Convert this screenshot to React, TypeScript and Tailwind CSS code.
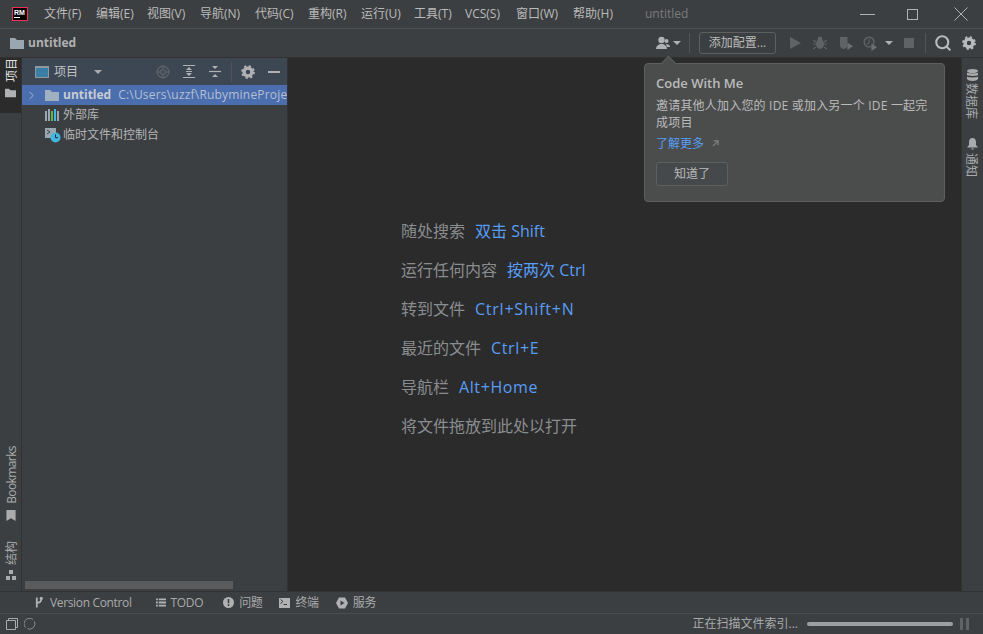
import { ChevronRight, Search } from "lucide-react";

const font = "font-['Open_Sans','Noto_Sans_CJK_SC',sans-serif]";

const menus = [
  ["文件(F)", "w-[52px]"],
  ["编辑(E)", "w-[51px]"],
  ["视图(V)", "w-[53px]"],
  ["导航(N)", "w-[55px]"],
  ["代码(C)", "w-[53px]"],
  ["重构(R)", "w-[53px]"],
  ["运行(U)", "w-[53px]"],
  ["工具(T)", "w-[51px]"],
  ["VCS(S)", "w-[51px]"],
  ["窗口(W)", "w-[57px]"],
  ["帮助(H)", "w-[41px]"],
];

const hints = [
  ["随处搜索", "双击 Shift", ""],
  ["运行任何内容", "按两次 Ctrl", ""],
  ["转到文件", "Ctrl+Shift+N", "tracking-[0.75px]"],
  ["最近的文件", "Ctrl+E", "tracking-[0.65px]"],
  ["导航栏", "Alt+Home", "tracking-[0.6px]"],
  ["将文件拖放到此处以打开", "", ""],
];

const FolderIcon = ({ className }: { className?: string }) => (
  <svg viewBox="1 2 14 11" className={className}>
    <path d="M1 2h5l2 2h7v9H1z" fill="currentColor" />
  </svg>
);

const Caret = ({ className }: { className?: string }) => (
  <svg viewBox="0 0 8 4" className={className}>
    <path d="M0 0h8L4 4z" fill="currentColor" />
  </svg>
);

const Gear = ({ className }: { className?: string }) => (
  <svg viewBox="0 0 14 14" className={className}>
    <circle cx="7" cy="7" r="3.9" fill="none" stroke="currentColor" strokeWidth="3.4" />
    <circle cx="7" cy="7" r="5.9" fill="none" stroke="currentColor" strokeWidth="2" strokeDasharray="2.3 2.33" />
  </svg>
);

const Logo = () => (
  <div className="w-4 h-[14px] bg-black border border-[#f0305a] flex flex-col items-start pl-px shrink-0">
    <span className="text-[7px] leading-[7px] mt-px font-bold text-white font-['Liberation_Sans',sans-serif]">RM</span>
    <span className="w-[6px] h-px bg-white mt-px" />
  </div>
);

const CodeWithMeIcon = () => (
  <svg viewBox="0 0 14 14" className="w-[14px] h-[14px] text-[#afb1b3]">
    <circle cx="5.5" cy="4" r="3.2" fill="currentColor" />
    <path d="M0 13c0-3 2-4 4-5h3c2 1 4 2 4 5z" fill="currentColor" />
    <circle cx="10.5" cy="5" r="2" fill="currentColor" />
    <path d="M10 8c2 0 4 1 4 3h-3z" fill="currentColor" />
  </svg>
);

const RunToolbar = () => (
  <div className="flex items-center text-[#5f6365]">
    <svg viewBox="0 0 11 12" className="w-[11px] h-3 ml-[14px]">
      <path d="M0 0l11 6-11 6z" fill="currentColor" />
    </svg>
    <svg viewBox="0 0 14 14" className="w-[14px] h-[14px] ml-[12px]">
      <ellipse cx="7" cy="8" rx="4" ry="5" fill="currentColor" />
      <circle cx="7" cy="3" r="2.4" fill="currentColor" />
      <path d="M0 4l3 2M14 4l-3 2M0 8h3M14 8h-3M0 13l3-2M14 13l-3-2" stroke="currentColor" strokeWidth="1.2" />
    </svg>
    <svg viewBox="0 0 16 16" className="w-[15px] h-[15px] ml-[12px]">
      <path d="M1 1h8v9c0 2-2 3-4 4-2-1-4-2-4-4z" fill="currentColor" />
      <path d="M9 7l6 4-6 4z" fill="#6b6f71" />
    </svg>
    <svg viewBox="0 0 16 16" className="w-[15px] h-[15px] ml-[9px]">
      <circle cx="6.5" cy="6.5" r="5.2" fill="none" stroke="currentColor" strokeWidth="1.6" />
      <path d="M6.5 3.5v3.5l-2 2" fill="none" stroke="currentColor" strokeWidth="1.2" />
      <path d="M9 8l6 4-6 4z" fill="#6b6f71" />
    </svg>
    <Caret className="w-2 h-1 ml-[7px] text-[#afb1b3]" />
    <div className="w-[10px] h-[10px] bg-[#5f6365] ml-[11px]" />
  </div>
);

const PanelTools = () => (
  <div className="flex items-center ml-auto mr-[7px] text-[#afb1b3]">
    <svg viewBox="0 0 14 14" className="w-[14px] h-[14px] text-[#5b6066]">
      <circle cx="7" cy="7" r="5.8" fill="none" stroke="currentColor" strokeWidth="1.4" />
      <circle cx="7" cy="7" r="2.4" fill="none" stroke="currentColor" strokeWidth="1.4" />
      <path d="M7 0v4M7 10v4M0 7h4M10 7h4" stroke="currentColor" strokeWidth="1.4" />
    </svg>
    <svg viewBox="0 0 12 13" className="w-3 h-[13px] ml-[13px]">
      <path d="M0 .5h12M0 12.5h12" stroke="currentColor" strokeWidth="1.2" />
      <path d="M3 5l3-3 3 3zM3 8l3 3 3-3z" fill="currentColor" />
      <path d="M3 6.5h6" stroke="currentColor" />
    </svg>
    <svg viewBox="0 0 12 13" className="w-3 h-[13px] ml-[14px]">
      <path d="M0 6.5h12" stroke="currentColor" strokeWidth="1.2" />
      <path d="M3 1l3 3 3-3zM3 12l3-3 3 3z" fill="currentColor" />
    </svg>
    <div className="w-px h-5 bg-[#4f5459] ml-[10px]" />
    <Gear className="w-[14px] h-[14px] ml-[9px]" />
    <div className="w-3 h-[2px] bg-[#afb1b3] ml-[13px]" />
  </div>
);

const SideLabelLeft = ({ label, icon, className }: { label: string; icon: React.ReactNode; className?: string }) => (
  <div className={`flex flex-col-reverse items-center ${className ?? ""}`}>
    {icon}
    <span className="[writing-mode:vertical-rl] [text-orientation:sideways] rotate-180 translate-x-[1px] text-[12px] leading-[22px]">{label}</span>
  </div>
);

const SideLabelRight = ({ label, icon, className }: { label: string; icon: React.ReactNode; className?: string }) => (
  <div className={`flex flex-col items-center text-[#a9abad] ${className ?? ""}`}>
    {icon}
    <span className="[writing-mode:vertical-rl] [text-orientation:sideways] -translate-x-[1px] text-[12px] leading-[21px]">{label}</span>
  </div>
);

const BottomTab = ({ icon, label, className }: { icon: React.ReactNode; label: string; className?: string }) => (
  <div className={`flex items-center text-[12px] text-[#a9abad] tracking-[-0.35px] ${className ?? ""}`}>
    {icon}
    <span>{label}</span>
  </div>
);

export default function App() {
  return (
    <div className={`w-[983px] h-[634px] bg-[#3c3f41] flex flex-col overflow-hidden relative ${font}`}>
      {/* Title bar */}
      <div className="h-[29px] shrink-0 flex items-center border-b border-[#515151] text-[12px] text-[#bbbbbb] pl-[12px]">
        <Logo />
        <div className="flex items-center ml-[16px] whitespace-nowrap">
          {menus.map(([m, w]) => (
            <span key={m} className={w}>
              {m}
            </span>
          ))}
        </div>
        <span className="ml-[31px] text-[#7a7c7e]">untitled</span>
        <div className="ml-auto flex items-center text-[#b0b2b4]">
          <div className="w-[15px] h-px bg-[#b0b2b4]" />
          <div className="w-[11px] h-[11px] border border-[#b0b2b4] ml-[32px]" />
          <svg viewBox="0 0 14 14" className="w-[14px] h-[14px] ml-[36px] mr-[15px]">
            <path d="M.5.5l13 13M13.5.5l-13 13" stroke="currentColor" strokeWidth="1" />
          </svg>
        </div>
      </div>

      {/* Navigation bar */}
      <div className="h-[29px] shrink-0 flex items-center border-b border-[#323232] pl-[10px]">
        <FolderIcon className="w-[14px] h-[11px] text-[#9aa7b0]" />
        <span className="ml-[4px] text-[12px] font-bold text-[#afb1b3]">untitled</span>
        <div className="ml-auto flex items-center">
          <CodeWithMeIcon />
          <Caret className="w-2 h-1 ml-[3px] text-[#afb1b3]" />
          <div className="w-px h-5 bg-[#4f5459] ml-[8px]" />
          <div className="h-[22px] w-[77px] ml-[9px] border border-[#5e6060] rounded-[3px] text-[12px] text-[#bbbbbb] flex items-center justify-center">
            添加配置...
          </div>
          <RunToolbar />
          <div className="w-px h-5 bg-[#4f5459] ml-[11px]" />
          <Search size={18} strokeWidth={2.8} className="ml-[8px] text-[#b8babc]" />
          <Gear className="w-[14px] h-[14px] ml-[10px] mr-[7px] text-[#b8babc]" />
        </div>
      </div>

      {/* Main */}
      <div className="flex-1 flex min-h-0">
        {/* Left strip */}
        <div className="w-[22px] shrink-0 flex flex-col border-r border-[#323232] text-[#a9abad]">
          <SideLabelLeft
            label="项目"
            className="h-[55px] justify-end gap-[6px] pb-[10px] bg-[#2b2b2b] text-[#e0e0e0]"
            icon={<FolderIcon className="w-[11px] h-[10px] text-[#afb1b3]" />}
          />
          <div className="mt-auto flex flex-col gap-[20px] pb-[11px]">
            <SideLabelLeft
              label="Bookmarks"
              className="gap-[6px] tracking-[-0.6px]"
              icon={
                <svg viewBox="0 0 10 12" className="w-[10px] h-[11px]">
                  <path d="M0 0h10v12L5 9l-5 3z" fill="currentColor" />
                </svg>
              }
            />
            <SideLabelLeft
              label="结构"
              className="gap-[5px]"
              icon={
                <svg viewBox="0 0 10 10" className="w-[10px] h-[10px]">
                  <path d="M3 0h4v4H3zM0 6h4v4H0zM6 6h4v4H6z" fill="currentColor" />
                </svg>
              }
            />
          </div>
        </div>

        {/* Project panel */}
        <div className="w-[266px] shrink-0 flex flex-col border-r border-[#323232]">
          <div className="h-[27px] shrink-0 bg-[#3d4754] flex items-center pl-[13px] text-[12px] text-[#c0c2c4]">
            <div className="w-[14px] h-[12px] border border-[#8d9aa4] bg-[#3a7ea6] border-t-2" />
            <span className="ml-[5px]">项目</span>
            <Caret className="w-[8px] h-1 ml-[16px] text-[#a9abad]" />
            <PanelTools />
          </div>
          <div className="h-5 shrink-0 bg-[#4b6eaf] flex items-center pl-[3px] text-[12px] whitespace-nowrap overflow-hidden">
            <ChevronRight size={13} strokeWidth={1.5} className="text-[#b9c4d8] shrink-0" />
            <FolderIcon className="w-[14px] h-[11px] ml-[7px] text-[#9fb0c0] shrink-0" />
            <span className="ml-1 font-bold text-[#c8ccd2]">untitled</span>
            <span className="ml-[7px] text-[#b5bfd0] tracking-[0.2px]">C:\Users\uzzf\RubymineProjects\untitled</span>
          </div>
          <div className="h-5 shrink-0 flex items-center pl-[23px] text-[12px] text-[#b3b5b7]">
            <svg viewBox="0 0 14 12" className="w-[14px] h-3">
              <path d="M0 2h2v10H0z" fill="#9aa7b0" />
              <path d="M3 0h2v12H3z" fill="#9aa7b0" />
              <path d="M6 2h2v10H6z" fill="#62b543" />
              <path d="M9 0h2v12H9z" fill="#40b6e0" />
              <path d="M12 2h2v10h-2z" fill="#9aa7b0" />
            </svg>
            <span className="ml-1">外部库</span>
          </div>
          <div className="h-5 shrink-0 flex items-center pl-[23px] text-[12px] text-[#b3b5b7]">
            <svg viewBox="0 0 16 16" className="w-4 h-4 -mr-[2px]">
              <path d="M0 1h11v10H0z" fill="#9aa7b0" />
              <path d="M2 3l3 2-3 2" fill="none" stroke="#3c3f41" strokeWidth="1" />
              <circle cx="10.5" cy="10.5" r="5" fill="#40b6e0" />
              <path d="M10.5 7.5v3.2h2.5" fill="none" stroke="#2b2b2b" strokeWidth="1" />
            </svg>
            <span className="ml-1">临时文件和控制台</span>
          </div>
          <div className="mt-auto mb-[2px] h-[8px] w-[208px] ml-[3px] bg-[#595b5d]" />
        </div>

        {/* Editor */}
        <div className="flex-1 bg-[#2b2b2b] flex flex-col pl-[113px] pt-[162px] gap-[16px] text-[16px] leading-[23px]">
          {hints.map(([label, key, track]) => (
            <div key={label} className="flex gap-[10px]">
              <span className="text-[#8a8d8f]">{label}</span>
              {key && <span className={`text-[#589df6] ${track}`}>{key}</span>}
            </div>
          ))}
        </div>

        {/* Right strip */}
        <div className="w-[22px] shrink-0 border-l border-[#323232] flex flex-col items-center pt-[11px]">
          <SideLabelRight
            label="数据库"
            className="gap-[2px]"
            icon={
              <svg viewBox="0 0 11 12" className="w-[11px] h-3">
                <ellipse cx="5.5" cy="2" rx="5.5" ry="2" fill="currentColor" />
                <path d="M0 3.6c1 1.2 10 1.2 11 0V6c-1 1.2-10 1.2-11 0zM0 7.6c1 1.2 10 1.2 11 0V10c-1 2.6-10 2.6-11 0z" fill="currentColor" />
              </svg>
            }
          />
          <SideLabelRight
            label="通知"
            className="gap-[3px] mt-[19px]"
            icon={
              <svg viewBox="0 0 11 12" className="w-[11px] h-3">
                <path d="M5.5 0C3 0 2 2 2 4v3L0 9.5h11L9 7V4c0-2-1-4-3.5-4zM4 10.5h3C7 12 4 12 4 10.5z" fill="currentColor" />
              </svg>
            }
          />
        </div>
      </div>

      {/* Bottom tool bar */}
      <div className="h-[23px] shrink-0 border-t border-b border-t-[#323232] border-b-[#4a4c4e] flex items-center pl-[35px]">
        <BottomTab
          label="Version Control"
          icon={
            <svg viewBox="0 0 10 13" className="w-[9px] h-[13px] mr-[6px] text-[#afb1b3]">
              <path d="M2 1v11M2 7c4 0 5-2 5-5" fill="none" stroke="currentColor" strokeWidth="2" />
              <circle cx="7" cy="2" r="1.8" fill="currentColor" />
            </svg>
          }
        />
        <BottomTab
          label="TODO"
          className="ml-[24px]"
          icon={
            <svg viewBox="0 0 11 9" className="w-[10px] h-[9px] mr-[5px] text-[#afb1b3]">
              <path d="M0 0h2v2H0zM3 0h8v2H3zM0 3.5h2v2H0zM3 3.5h8v2H3zM0 7h2v2H0zM3 7h8v2H3z" fill="currentColor" />
            </svg>
          }
        />
        <BottomTab
          label="问题"
          className="ml-[20px]"
          icon={
            <svg viewBox="0 0 11 11" className="w-[11px] h-[11px] mr-[5px] text-[#afb1b3]">
              <circle cx="5.5" cy="5.5" r="5.5" fill="currentColor" />
              <path d="M4.7 2h1.6v4.2H4.7zM4.7 7.3h1.6v1.6H4.7z" fill="#3c3f41" />
            </svg>
          }
        />
        <BottomTab
          label="终端"
          className="ml-[17px]"
          icon={
            <svg viewBox="0 0 11 10" className="w-[11px] h-[10px] mr-[5px] text-[#afb1b3]">
              <path d="M0 0h11v10H0z" fill="currentColor" />
              <path d="M1.5 1.5l2.5 2-2.5 2M4.5 6.5h3.5" fill="none" stroke="#3c3f41" strokeWidth="1" />
            </svg>
          }
        />
        <BottomTab
          label="服务"
          className="ml-[17px]"
          icon={
            <svg viewBox="0 0 12 12" className="w-3 h-3 mr-[5px] text-[#afb1b3]">
              <path d="M3 .5h6L12 6l-3 5.5H3L0 6z" fill="currentColor" />
              <path d="M4.5 3.5l4 2.5-4 2.5z" fill="#3c3f41" />
            </svg>
          }
        />
      </div>

      {/* Status bar */}
      <div className="h-[20px] shrink-0 flex items-center pl-[6px] text-[12px] text-[#a9abad]">
        <svg viewBox="0 0 12 12" className="w-3 h-3 text-[#a9abad]">
          <path d="M.5 2.5h9v9h-9zM2.5 2.5v-2h9v9h-2" fill="none" stroke="currentColor" />
        </svg>
        <svg viewBox="0 0 12 12" className="w-3 h-3 ml-[6px] text-[#8a8c8e]">
          <path d="M1.5 9.5A5.5 5.5 0 0 1 9 1.5M10.5 3.5A5.5 5.5 0 0 1 3.5 10.8" fill="none" stroke="currentColor" />
        </svg>
        <span className="ml-auto">正在扫描文件索引...</span>
        <div className="w-[146px] h-1 rounded-full bg-[#9c9e9f] ml-[9px]" />
        <div className="flex gap-[3px] ml-[7px] mr-[14px]">
          <div className="w-[3px] h-3 bg-[#5f6365]" />
          <div className="w-[3px] h-3 bg-[#5f6365]" />
        </div>
      </div>

      {/* Code With Me popup */}
      <div className="absolute left-[644px] top-[63px] w-[301px] h-[139px] bg-[#4b4d4d] border border-[#5e6060] rounded-[4px] px-[11px] pt-[10px] text-[12px]">
        <div className="absolute -top-[6px] left-[18px] w-[11px] h-[11px] rotate-45 bg-[#4b4d4d] border-l border-t border-[#5e6060]" />
        <div className="text-[13px] font-semibold text-[#bbbbbb] leading-[18px]">Code With Me</div>
        <p className="mt-[5px] text-[#bbbbbb] leading-[17px] tracking-[0.2px]">邀请其他人加入您的 IDE 或加入另一个 IDE 一起完成项目</p>
        <div className="mt-[4px] flex items-center text-[#589df6] leading-[17px]">
          了解更多
          <svg viewBox="0 0 8 8" className="w-[7px] h-[7px] ml-[8px] text-[#808284]">
            <path d="M1 7l5.5-5.5M2 1h5v5" fill="none" stroke="currentColor" strokeWidth="1.3" />
          </svg>
        </div>
        <div className="mt-[10px] w-[72px] h-6 bg-[#45494b] border border-[#5e6060] rounded-[3px] flex items-center justify-center text-[#bbbbbb]">
          知道了
        </div>
      </div>
    </div>
  );
}
